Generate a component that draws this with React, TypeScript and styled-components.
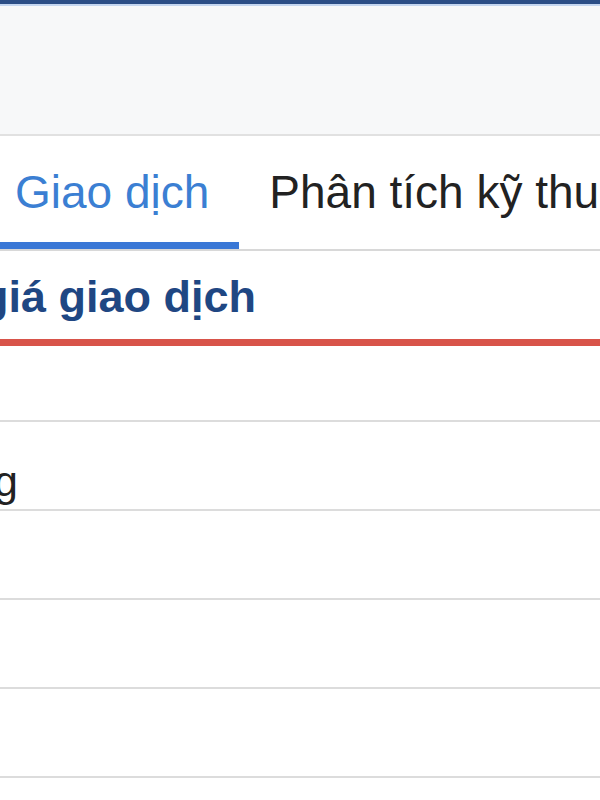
import React from "react";
import styled, { createGlobalStyle } from "styled-components";

const GlobalStyle = createGlobalStyle`
  html, body {
    margin: 0;
    padding: 0;
    background: #ffffff;
    overflow: hidden;
  }
  body {
    font-family: "Liberation Sans", Arial, "Noto Sans", sans-serif;
    color: #222222;
  }
`;

const Page = styled.div`
  margin-left: -15px;
  width: 640px;
`;

const TopBar = styled.div`
  height: 4px;
  background: #2b4e86;
  border-bottom: 2px solid #c4d6f0;
`;

const Header = styled.header`
  height: 128px;
  background: #f7f8f9;
  border-bottom: 2px solid #e1e1e1;
`;

const TabBar = styled.nav`
  display: flex;
  white-space: nowrap;
  border-bottom: 2px solid #d8d8d8;
`;

const Tab = styled.div<{ $active?: boolean }>`
  box-sizing: border-box;
  height: 113px;
  padding: 30px 30px 0;
  font-size: 46px;
  line-height: 53px;
  color: ${(p) => (p.$active ? "#3b7fd3" : "#222222")};
  border-bottom: 7px solid ${(p) => (p.$active ? "#3a78d6" : "transparent")};
  flex-shrink: 0;
`;

const SectionHeading = styled.h2`
  margin: 0 0 0 -4px;
  padding: 21px 0 17px 0;
  font-size: 45px;
  line-height: 50px;
  font-weight: 700;
  color: #1f4783;
  white-space: nowrap;
  border-bottom: 7px solid #d8544a;
`;

const Table = styled.div`
  display: flex;
  flex-direction: column;
`;

const Row = styled.div`
  display: flex;
  align-items: flex-end;
  box-sizing: border-box;
  height: 89px;
  padding-bottom: 3px;
  border-bottom: 2px solid #dcdcdc;

  &:first-child {
    height: 76px;
  }
`;

const LabelCell = styled.div`
  display: flex;
  justify-content: flex-end;
  width: 33px;
  flex-shrink: 0;
  font-size: 43px;
  line-height: 50px;
  color: #222222;
  white-space: nowrap;
`;

const rows = ["", "Khối lượng", "", "", "", ""];

export default function App() {
  return (
    <>
      <GlobalStyle />
      <Page>
        <TopBar />
        <Header />
        <TabBar>
          <Tab $active>Giao dịch</Tab>
          <Tab>Phân tích kỹ thuật</Tab>
        </TabBar>
        <SectionHeading>giá giao dịch</SectionHeading>
        <Table>
          {rows.map((label, i) => (
            <Row key={i}>
              <LabelCell>
                <span>{label}</span>
              </LabelCell>
            </Row>
          ))}
        </Table>
      </Page>
    </>
  );
}
